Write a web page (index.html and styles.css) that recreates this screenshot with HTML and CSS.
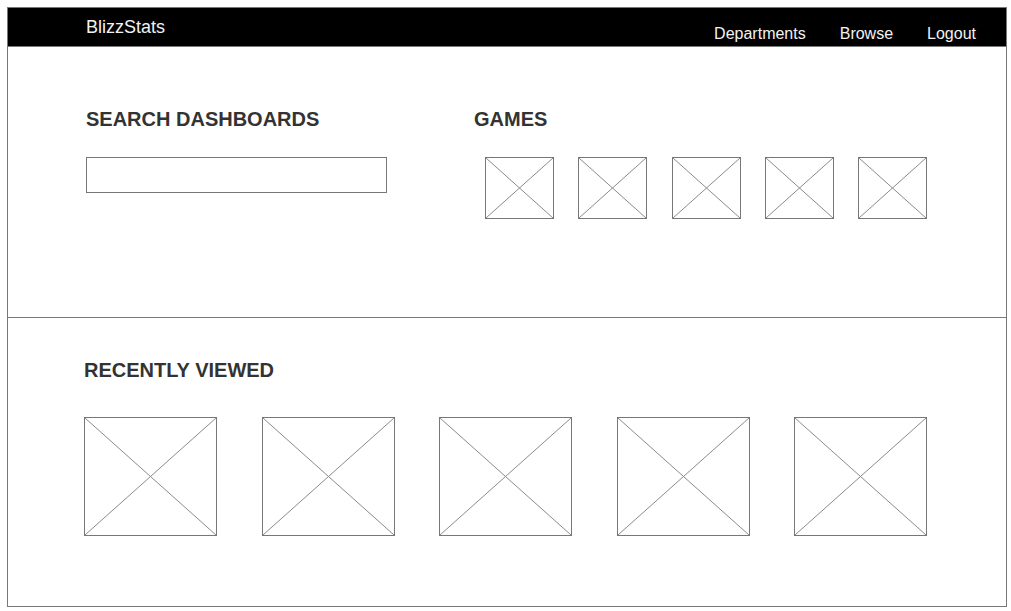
FILE: index.html
```html
<!DOCTYPE html>
<html>
<head>
<meta charset="utf-8">
<title>BlizzStats</title>
<link rel="stylesheet" href="styles.css">
</head>
<body>
<div class="frame">
  <header class="topbar">
    <div class="brand">BlizzStats</div>
    <nav class="nav">
      <a class="nav-link">Departments</a>
      <a class="nav-link">Browse</a>
      <a class="nav-link">Logout</a>
    </nav>
  </header>
  <section class="top-section">
    <div class="search-col">
      <h2 class="heading">SEARCH DASHBOARDS</h2>
      <div class="search-box"></div>
    </div>
    <div class="games-col">
      <h2 class="heading">GAMES</h2>
      <div class="games-row">
        <div class="ph game"><svg viewBox="0 0 100 100" preserveAspectRatio="none"><line x1="0" y1="0" x2="100" y2="100"/><line x1="100" y1="0" x2="0" y2="100"/></svg></div>
        <div class="ph game"><svg viewBox="0 0 100 100" preserveAspectRatio="none"><line x1="0" y1="0" x2="100" y2="100"/><line x1="100" y1="0" x2="0" y2="100"/></svg></div>
        <div class="ph game"><svg viewBox="0 0 100 100" preserveAspectRatio="none"><line x1="0" y1="0" x2="100" y2="100"/><line x1="100" y1="0" x2="0" y2="100"/></svg></div>
        <div class="ph game"><svg viewBox="0 0 100 100" preserveAspectRatio="none"><line x1="0" y1="0" x2="100" y2="100"/><line x1="100" y1="0" x2="0" y2="100"/></svg></div>
        <div class="ph game"><svg viewBox="0 0 100 100" preserveAspectRatio="none"><line x1="0" y1="0" x2="100" y2="100"/><line x1="100" y1="0" x2="0" y2="100"/></svg></div>
      </div>
    </div>
  </section>
  <section class="bottom-section">
    <h2 class="heading">RECENTLY VIEWED</h2>
    <div class="recent-row">
      <div class="ph recent"><svg viewBox="0 0 100 100" preserveAspectRatio="none"><line x1="0" y1="0" x2="100" y2="100"/><line x1="100" y1="0" x2="0" y2="100"/></svg></div>
      <div class="ph recent"><svg viewBox="0 0 100 100" preserveAspectRatio="none"><line x1="0" y1="0" x2="100" y2="100"/><line x1="100" y1="0" x2="0" y2="100"/></svg></div>
      <div class="ph recent"><svg viewBox="0 0 100 100" preserveAspectRatio="none"><line x1="0" y1="0" x2="100" y2="100"/><line x1="100" y1="0" x2="0" y2="100"/></svg></div>
      <div class="ph recent"><svg viewBox="0 0 100 100" preserveAspectRatio="none"><line x1="0" y1="0" x2="100" y2="100"/><line x1="100" y1="0" x2="0" y2="100"/></svg></div>
      <div class="ph recent"><svg viewBox="0 0 100 100" preserveAspectRatio="none"><line x1="0" y1="0" x2="100" y2="100"/><line x1="100" y1="0" x2="0" y2="100"/></svg></div>
    </div>
  </section>
</div>
</body>
</html>
```
FILE: styles.css
```css
* { box-sizing: border-box; }
html, body { margin: 0; padding: 0; background: #fff; }
body { font-family: "Liberation Sans", Arial, sans-serif; }

.frame {
  margin: 7px 0 0 7px;
  width: 1000px;
  height: 600px;
  border: 1px solid #777;
  display: flex;
  flex-direction: column;
}

.topbar {
  height: 39px;
  flex: none;
  background: #000;
  border-bottom: 1px solid #777;
  display: flex;
  justify-content: space-between;
  align-items: flex-start;
  padding: 0 30px 0 78px;
}
.brand {
  color: #f2f2f2;
  font-size: 18px;
  line-height: 18px;
  padding-top: 10px;
}
.nav {
  display: flex;
  gap: 34px;
  padding-top: 18px;
}
.nav-link {
  color: #f2f2f2;
  font-size: 16px;
  line-height: 16px;
}

.top-section {
  height: 271px;
  flex: none;
  border-bottom: 1px solid #777;
  display: flex;
  padding: 62px 0 0 78px;
}
.heading {
  margin: 0;
  font-size: 20px;
  line-height: 20px;
  font-weight: bold;
  color: #333;
}
.search-col { width: 388px; }
.search-box {
  margin-top: 28px;
  width: 301px;
  height: 36px;
  border: 1px solid #777;
}
.games-row {
  margin-top: 28px;
  margin-left: 11px;
  display: flex;
  gap: 24.25px;
}

.ph {
  border: 1px solid #777;
  flex: none;
}
.ph svg {
  display: block;
  width: 100%;
  height: 100%;
}
.ph line {
  stroke: #8a8a8a;
  stroke-width: 1;
  vector-effect: non-scaling-stroke;
}
.game { width: 69px; height: 62px; }

.bottom-section {
  flex: 1;
  padding: 42px 0 0 76px;
}
.recent-row {
  margin-top: 37px;
  display: flex;
  gap: 44.5px;
}
.recent { width: 133px; height: 119px; }
```
